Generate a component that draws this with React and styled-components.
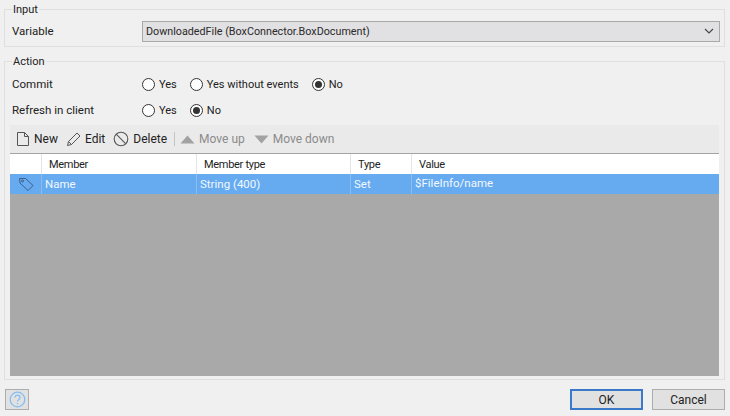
import React from "react";
import styled, { createGlobalStyle } from "styled-components";

const GlobalStyle = createGlobalStyle`
  html, body {
    margin: 0;
    padding: 0;
    background: #f0f0f0;
  }
  body {
    font-family: Roboto, "Open Sans", sans-serif;
    font-size: 11.5px;
    color: #222;
  }
  * {
    box-sizing: border-box;
  }
`;

const Dialog = styled.div`
  width: 730px;
  height: 416px;
  display: flex;
  flex-direction: column;
  padding: 3px 5px 6px 4px;
  background: #f0f0f0;
`;

const Group = styled.fieldset`
  margin: ${(props) => props.$top || 0}px 0 0 0;
  padding: ${(props) => props.$pad || 0}px 0 0 0;
  min-width: 0;
  height: ${(props) => (props.$grow ? "auto" : "44px")};
  flex: ${(props) => (props.$grow ? 1 : "none")};
  display: flex;
  flex-direction: column;
  border: 1px solid #dfdfdf;
`;

const Legend = styled.legend`
  margin-left: 7px;
  padding: 0 1px;
  line-height: 13px;
  font-size: 11px;
`;

const FormRow = styled.div`
  display: flex;
  align-items: center;
  height: 26px;
  padding-left: 7px;
`;

const Label = styled.span`
  width: 130px;
  flex: none;
`;

const Select = styled.div`
  width: 578px;
  height: 21px;
  display: flex;
  align-items: center;
  justify-content: space-between;
  padding: 0 5px 0 3px;
  background: #e1e0e2;
  border: 1px solid #a9a9a9;
  color: #2a2a2a;
  font-size: 10.75px;
`;

const RadioGroup = styled.div`
  display: flex;
  align-items: center;
  gap: 13px;
`;

const RadioItem = styled.label`
  display: flex;
  align-items: center;
  gap: 4px;
  font-size: 11px;
`;

const RadioCircle = styled.span`
  width: 13px;
  height: 13px;
  display: flex;
  align-items: center;
  justify-content: center;
  border: 1px solid #333;
  border-radius: 50%;
  background: #fff;

  &::after {
    content: "";
    width: 7px;
    height: 7px;
    border-radius: 50%;
    background: ${(props) => (props.$checked ? "#333" : "transparent")};
  }
`;

const Toolbar = styled.div`
  display: flex;
  align-items: center;
  height: 28px;
  margin: 2px 5px 0 5px;
  padding: 0 0 0 6px;
  background: #eaeaea;
  font-size: 12px;
`;

const ToolButton = styled.span`
  display: flex;
  align-items: center;
  gap: 4px;
  margin-right: ${(props) => props.$space || 8}px;
  color: ${(props) => (props.$disabled ? "#8b8b8b" : "#222")};
`;

const ToolSeparator = styled.span`
  width: 1px;
  height: 14px;
  margin-right: 5px;
  background: #c4c4c4;
`;

const Grid = styled.div`
  flex: 1;
  margin: 0 5px 3px 5px;
  display: flex;
  flex-direction: column;
  background: #a9a9a9;
  border-top: 1px solid #a4a4a4;
`;

const GridHeader = styled.div`
  display: flex;
  height: 20px;
  background: #fff;
  color: #222;
  font-size: 11px;
  letter-spacing: -0.3px;
`;

const HeaderCell = styled.div`
  width: ${(props) => props.$width}px;
  flex: ${(props) => (props.$fill ? 1 : "none")};
  display: flex;
  align-items: center;
  padding-left: 7px;
  border-right: ${(props) => (props.$fill ? "none" : "1px solid #e4e4e4")};
`;

const GridRow = styled.div`
  display: flex;
  height: 20px;
  background: #66aaf0;
  color: #f2f8ff;
`;

const RowCell = styled.div`
  width: ${(props) => props.$width}px;
  flex: ${(props) => (props.$fill ? 1 : "none")};
  display: flex;
  align-items: center;
  justify-content: ${(props) => (props.$center ? "center" : "flex-start")};
  padding-left: ${(props) => (props.$center ? 0 : 3)}px;
  padding-bottom: ${(props) => props.$lift || 0}px;
  border-right: ${(props) => (props.$fill ? "none" : "1px solid #8dbdf0")};
`;

const Footer = styled.div`
  display: flex;
  align-items: center;
  justify-content: space-between;
  height: 21px;
  margin-top: 9px;
  padding-left: 1px;
`;

const HelpButton = styled.div`
  width: 24px;
  height: 21px;
  display: flex;
  align-items: center;
  justify-content: center;
  background: #e1e1e1;
  border: 1px solid #adadad;
`;

const FooterActions = styled.div`
  display: flex;
  gap: 9px;
`;

const DialogButton = styled.div`
  width: 73px;
  height: 21px;
  display: flex;
  align-items: center;
  justify-content: center;
  background: #e1e1e1;
  border: ${(props) => (props.$primary ? "2px solid #3a78c8" : "1px solid #adadad")};
  color: #222;
  font-size: 12px;
`;

const Radio = ({ checked, children }) => (
  <RadioItem>
    <RadioCircle $checked={checked} />
    {children}
  </RadioItem>
);

const NewIcon = () => (
  <svg width="14" height="16" viewBox="0 0 14 16" fill="none" stroke="#555" strokeWidth="1">
    <path d="M1.5 1.5h7l4 4v9h-11z" />
    <path d="M8.5 1.5v4h4" />
  </svg>
);

const EditIcon = () => (
  <svg width="15" height="16" viewBox="0 0 15 16" fill="none" stroke="#555" strokeWidth="1">
    <path d="M1.5 14.5l1-4 8.5-8.5 3 3-8.5 8.5z" />
    <path d="M2.5 10.5l3 3" />
  </svg>
);

const DeleteIcon = () => (
  <svg width="16" height="16" viewBox="0 0 16 16" fill="none" stroke="#555" strokeWidth="1.1">
    <circle cx="8" cy="8" r="6.8" />
    <path d="M3.2 3.2l9.6 9.6" />
  </svg>
);

const TriangleIcon = ({ down }) => (
  <svg width="15" height="9" viewBox="0 0 15 9" fill="#a2a2a2">
    <path d={down ? "M0.5 0.5h14l-7 8z" : "M7.5 0.5l7 8h-14z"} />
  </svg>
);

const TagIcon = () => (
  <svg width="16" height="16" viewBox="0 0 16 16" fill="none" stroke="#3f5f85" strokeWidth="1">
    <path d="M1.5 2.5h6l7.5 7-5 5-8-7.5z" />
    <circle cx="4.5" cy="5" r="1" />
  </svg>
);

const ChevronIcon = () => (
  <svg width="10" height="6" viewBox="0 0 10 6" fill="none" stroke="#444" strokeWidth="1.1">
    <path d="M1 1l4 4 4-4" />
  </svg>
);

const HelpIcon = () => (
  <svg width="17" height="17" viewBox="0 0 17 17" fill="none" stroke="#86bdf2" strokeWidth="1.3">
    <circle cx="8.5" cy="8.5" r="7.3" />
    <path d="M6 6.6c0-3.2 5-3.2 5 0 0 2-2.5 2-2.5 4" />
    <path d="M8.5 12v1.4" />
  </svg>
);

export default function App() {
  return (
    <Dialog>
      <GlobalStyle />
      <Group $pad={2}>
        <Legend>Input</Legend>
        <FormRow>
          <Label>Variable</Label>
          <Select>
            DownloadedFile (BoxConnector.BoxDocument)
            <ChevronIcon />
          </Select>
        </FormRow>
      </Group>
      <Group $grow $top={8} $pad={3}>
        <Legend>Action</Legend>
        <FormRow>
          <Label>Commit</Label>
          <RadioGroup>
            <Radio>Yes</Radio>
            <Radio>Yes without events</Radio>
            <Radio checked>No</Radio>
          </RadioGroup>
        </FormRow>
        <FormRow>
          <Label>Refresh in client</Label>
          <RadioGroup>
            <Radio>Yes</Radio>
            <Radio checked>No</Radio>
          </RadioGroup>
        </FormRow>
        <Toolbar>
          <ToolButton>
            <NewIcon />
            New
          </ToolButton>
          <ToolButton>
            <EditIcon />
            Edit
          </ToolButton>
          <ToolButton $space={7}>
            <DeleteIcon />
            Delete
          </ToolButton>
          <ToolSeparator />
          <ToolButton $disabled $space={9}>
            <TriangleIcon />
            Move up
          </ToolButton>
          <ToolButton $disabled>
            <TriangleIcon down />
            Move down
          </ToolButton>
        </Toolbar>
        <Grid>
          <GridHeader>
            <HeaderCell $width={32} />
            <HeaderCell $width={155}>Member</HeaderCell>
            <HeaderCell $width={154}>Member type</HeaderCell>
            <HeaderCell $width={61}>Type</HeaderCell>
            <HeaderCell $fill>Value</HeaderCell>
          </GridHeader>
          <GridRow>
            <RowCell $width={32} $center>
              <TagIcon />
            </RowCell>
            <RowCell $width={155}>Name</RowCell>
            <RowCell $width={154}>String (400)</RowCell>
            <RowCell $width={61}>Set</RowCell>
            <RowCell $fill $lift={3}>$FileInfo/name</RowCell>
          </GridRow>
        </Grid>
      </Group>
      <Footer>
        <HelpButton>
          <HelpIcon />
        </HelpButton>
        <FooterActions>
          <DialogButton $primary>OK</DialogButton>
          <DialogButton>Cancel</DialogButton>
        </FooterActions>
      </Footer>
    </Dialog>
  );
}
